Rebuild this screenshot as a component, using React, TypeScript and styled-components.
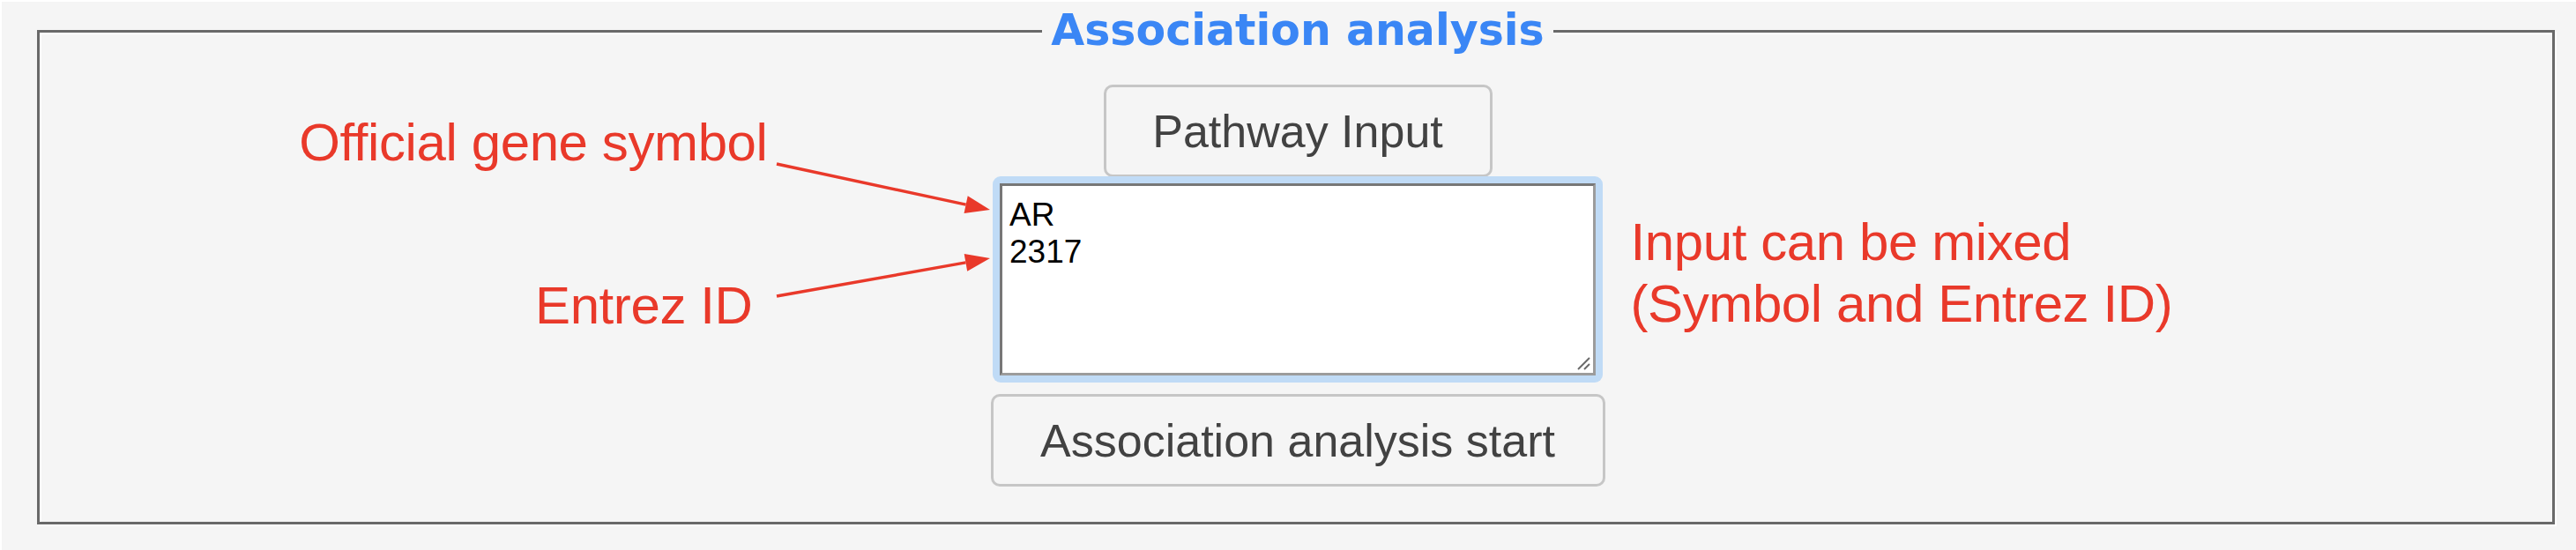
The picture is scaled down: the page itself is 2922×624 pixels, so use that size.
import styled, { createGlobalStyle } from 'styled-components';

const GlobalStyle = createGlobalStyle`
  html, body {
    margin: 0;
    padding: 0;
    background: #f5f5f5;
  }
`;

const RED = '#e9392a';

const Page = styled.div`
  box-sizing: border-box;
  width: 2922px;
  height: 624px;
  padding: 3px 24px 0 40px;
  border-top: 2px solid #ffffff;
  border-left: 2px solid #ffffff;
  background: #f5f5f5;
  font-family: 'Liberation Sans', Arial, sans-serif;
`;

const Panel = styled.fieldset`
  margin: 0;
  padding: 31px 0 40px 4px;
  border: 3px solid #696969;
  box-shadow: inset 2px 2px 0 #ffffff, 2px 2px 0 #ffffff;
`;

const Title = styled.legend`
  margin: 0 auto;
  padding: 0 10px;
  background: #f5f5f5;
  font-family: 'DejaVu Sans', Verdana, sans-serif;
  font-weight: bold;
  font-size: 49px;
  line-height: 60px;
  color: #3a86f5;
`;

const Layout = styled.div`
  display: grid;
  grid-template-columns: 1fr auto 1fr;
`;

const LeftNotes = styled.div`
  position: relative;
  display: flex;
  flex-direction: column;
  align-items: flex-end;
  padding-top: 31px;
`;

const RightNotes = styled.div`
  padding: 144px 0 0 29px;
`;

const Note = styled.div<{ $right?: number; $top?: number }>`
  margin-right: ${(p) => p.$right ?? 0}px;
  margin-top: ${(p) => p.$top ?? 0}px;
  font-size: 60px;
  letter-spacing: -0.4px;
  line-height: 70px;
  color: ${RED};
  white-space: nowrap;
`;

const Arrows = styled.svg`
  position: absolute;
  top: 0;
  right: 0;
  overflow: visible;
`;

const Center = styled.div`
  display: flex;
  flex-direction: column;
  align-items: center;
`;

const Button = styled.button<{ $width: number }>`
  box-sizing: border-box;
  width: ${(p) => p.$width}px;
  height: 105px;
  border: 3px solid #c6c6c6;
  border-radius: 10px;
  background: #f5f5f5;
  color: #424242;
  font-family: 'Liberation Sans', Arial, sans-serif;
  font-size: 52px;
  padding: 0;
  cursor: pointer;
`;

const FocusRing = styled.div`
  position: relative;
  margin-top: -1px;
  margin-bottom: 13px;
  padding: 8px;
  border-radius: 9px;
  background: #c0dbf6;
  display: flex;
`;

const GeneInput = styled.textarea`
  box-sizing: border-box;
  width: 676px;
  height: 218px;
  margin: 0;
  padding: 12px 8px;
  border-style: solid;
  border-width: 3px;
  border-color: #777777 #9c9c9c #9c9c9c #777777;
  background: #ffffff;
  color: #000000;
  font-family: 'Liberation Sans', Arial, sans-serif;
  font-size: 37px;
  line-height: 42px;
  outline: none;
  resize: none;
`;

const Grip = styled.svg`
  position: absolute;
  right: 14px;
  bottom: 14px;
  pointer-events: none;
`;

function Arrow({ x1, y1, x2, y2 }: { x1: number; y1: number; x2: number; y2: number }) {
  const a = Math.atan2(y2 - y1, x2 - x1);
  const len = 28;
  const half = 10;
  const bx = x2 - len * Math.cos(a);
  const by = y2 - len * Math.sin(a);
  const px = -Math.sin(a) * half;
  const py = Math.cos(a) * half;
  const head = `${x2},${y2} ${bx + px},${by + py} ${bx - px},${by - py}`;
  return (
    <g>
      <line x1={x1} y1={y1} x2={bx} y2={by} stroke={RED} strokeWidth={3.5} />
      <polygon points={head} fill={RED} />
    </g>
  );
}

export default function App() {
  return (
    <>
      <GlobalStyle />
      <Page>
        <Panel>
          <Title>Association analysis</Title>
          <Layout>
            <LeftNotes>
              <Note $right={253}>Official gene symbol</Note>
              <Note $right={270} $top={115}>
                Entrez ID
              </Note>
              <Arrows width={262} height={300} viewBox="0 0 262 300">
                <Arrow x1={19} y1={90} x2={261} y2={142} />
                <Arrow x1={19} y1={240} x2={261} y2={197} />
              </Arrows>
            </LeftNotes>
            <Center>
              <Button $width={441}>Pathway Input</Button>
              <FocusRing>
                <GeneInput defaultValue={'AR\n2317'} />
                <Grip width={16} height={16} viewBox="0 0 16 16">
                  <line x1={2} y1={15} x2={15} y2={2} stroke="#6a6a6a" strokeWidth={2} />
                  <line x1={9} y1={15} x2={15} y2={9} stroke="#6a6a6a" strokeWidth={2} />
                </Grip>
              </FocusRing>
              <Button $width={697}>Association analysis start</Button>
            </Center>
            <RightNotes>
              <Note>
                Input can be mixed
                <br />
                (Symbol and Entrez ID)
              </Note>
            </RightNotes>
          </Layout>
        </Panel>
      </Page>
    </>
  );
}
